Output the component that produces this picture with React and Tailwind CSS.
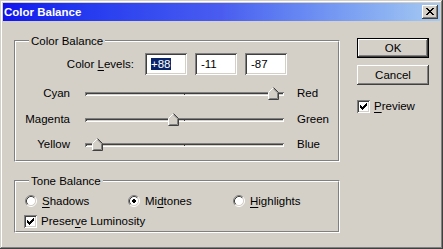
import React from "react";

const sunken =
  "shadow-[inset_1px_1px_0_#808080,inset_-1px_-1px_0_#ffffff,inset_2px_2px_0_#404040,inset_-2px_-2px_0_#d4d0c8]";
const raised =
  "shadow-[inset_-1px_-1px_0_#404040,inset_1px_1px_0_#ffffff,inset_-2px_-2px_0_#808080]";

function U({ children }) {
  return <span className="underline decoration-1 underline-offset-[2px]">{children}</span>;
}

function GroupBox({ title, className, children }) {
  return (
    <div className={`border border-t-[#808080] border-l-[#808080] border-b-white border-r-white ${className}`}>
      <div className="h-full border border-t-white border-l-white border-b-[#808080] border-r-[#808080]">
        <div className="-mt-[7px] ml-[13px] w-fit bg-[#d4d0c8] px-[2px] leading-[13px]">{title}</div>
        {children}
      </div>
    </div>
  );
}

function Thumb({ left }) {
  return (
    <svg
      className="absolute top-[-5px]"
      style={{ left }}
      width="11"
      height="13"
      viewBox="0 0 11 13"
    >
      <polygon points="5.5,0.5 10.5,5.5 10.5,12.5 0.5,12.5 0.5,5.5" fill="#d4d0c8" />
      <path d="M0.5 12 V5.5 L5.5 0.5" fill="none" stroke="#ffffff" strokeWidth="1" />
      <path d="M5.5 0.5 L10.5 5.5 V12.5 H0.5" fill="none" stroke="#404040" strokeWidth="1" />
      <path d="M5.5 1.8 L9.5 5.8 V11.5 H1.5" fill="none" stroke="#808080" strokeWidth="1" />
    </svg>
  );
}

function SliderRow({ left, right, value, className }) {
  const pos = Math.round(94.5 + value * 1.01);
  return (
    <div className={`flex h-[13px] ${className}`}>
      <div className="w-[54px] text-right leading-[13px]">{left}</div>
      <div className={`relative ml-[15px] mt-[5px] h-[4px] w-[199px] bg-[#d4d0c8] ${sunken}`}>
        <div className="absolute left-[99px] top-[1px] h-[2px] w-px bg-[#404040]" />
        <Thumb left={pos} />
      </div>
      <div className="ml-[13px] leading-[13px]">{right}</div>
    </div>
  );
}

function Radio({ checked }) {
  return (
    <svg width="12" height="12" viewBox="0 0 12 12" className="shrink-0">
      <circle cx="6" cy="6" r="4.5" fill="#ffffff" />
      <path d="M2.11 9.89 A5.5 5.5 0 0 1 9.89 2.11" fill="none" stroke="#808080" />
      <path d="M9.89 2.11 A5.5 5.5 0 0 1 2.11 9.89" fill="none" stroke="#ffffff" />
      <path d="M2.82 9.18 A4.5 4.5 0 0 1 9.18 2.82" fill="none" stroke="#404040" />
      <path d="M9.18 2.82 A4.5 4.5 0 0 1 2.82 9.18" fill="none" stroke="#d4d0c8" />
      {checked && (
        <g fill="#000000" shapeRendering="crispEdges">
          <rect x="5" y="4" width="2" height="4" />
          <rect x="4" y="5" width="4" height="2" />
        </g>
      )}
    </svg>
  );
}

function Check() {
  const rows = [
    [6, 0, 1],
    [5, 1, 2],
    [0, 2, 1],
    [4, 2, 3],
    [0, 3, 2],
    [3, 3, 3],
    [0, 4, 5],
    [1, 5, 3],
    [2, 6, 1],
  ];
  return (
    <div className={`relative h-[13px] w-[13px] shrink-0 bg-white ${sunken}`}>
      <svg width="13" height="13" viewBox="0 0 13 13" className="block" shapeRendering="crispEdges">
        {rows.map(([x, y, w], i) => (
          <rect key={i} x={3 + x} y={3 + y} width={w} height="1" fill="#000000" />
        ))}
      </svg>
    </div>
  );
}

function Field({ children }) {
  return (
    <div className={`flex h-[22px] w-[42px] items-center bg-white pl-[6px] ${sunken}`}>{children}</div>
  );
}

export default function App() {
  return (
    <div
      className={`h-[249px] w-[443px] overflow-hidden bg-[#d4d0c8] p-[3px] text-[11.5px] text-black font-['Liberation_Sans',Arial,sans-serif] shadow-[inset_-1px_-1px_0_#404040,inset_1px_1px_0_#d4d0c8,inset_-2px_-2px_0_#808080,inset_2px_2px_0_#ffffff]`}
    >
      {/* Title bar */}
      <div className="flex h-[18px] items-center bg-gradient-to-r from-[#1212ee] via-[#4a5cf0] to-[#a6caf0] pl-[1px]">
        <div className="flex-1 text-[11.5px] font-bold leading-[18px] text-white">Color Balance</div>
        <div className={`mr-[2px] flex h-[14px] w-[16px] items-center justify-center bg-[#d4d0c8] ${raised}`}>
          <svg width="8" height="7" viewBox="0 0 8 7" shapeRendering="crispEdges" className="mt-[-1px]">
            <g fill="#000000">
              <rect x="0" y="0" width="2" height="1" />
              <rect x="6" y="0" width="2" height="1" />
              <rect x="1" y="1" width="2" height="1" />
              <rect x="5" y="1" width="2" height="1" />
              <rect x="2" y="2" width="4" height="1" />
              <rect x="3" y="3" width="2" height="1" />
              <rect x="2" y="4" width="4" height="1" />
              <rect x="1" y="5" width="2" height="1" />
              <rect x="5" y="5" width="2" height="1" />
              <rect x="0" y="6" width="2" height="1" />
              <rect x="6" y="6" width="2" height="1" />
            </g>
          </svg>
        </div>
      </div>

      {/* Body */}
      <div className="flex">
        <div className="ml-[11px] mt-[19px] w-[326px]">
          <GroupBox className="h-[122px]" title="Color Balance">
            <div className="mt-[5px] flex h-[22px] items-center">
              <div className="w-[118px] text-right leading-[13px]">
                Color <U>L</U>evels:
              </div>
              <div className="ml-[11px] flex gap-[8px]">
                <Field>
                  <span className="bg-[#0a246a] leading-[12px] text-white">+88</span>
                </Field>
                <Field>
                  <span className="leading-[12px]">-11</span>
                </Field>
                <Field>
                  <span className="leading-[12px]">-87</span>
                </Field>
              </div>
            </div>
            <SliderRow className="mt-[12px]" left="Cyan" right="Red" value={88} />
            <SliderRow className="mt-[13px]" left="Magenta" right="Green" value={-11} />
            <SliderRow className="mt-[12px]" left="Yellow" right="Blue" value={-87} />
          </GroupBox>

          <GroupBox className="mt-[18px] h-[53px]" title="Tone Balance">
            <div className="mt-[7px] flex h-[12px] items-center pl-[9px]">
              <div className="flex w-[103px] items-center gap-[5px]">
                <Radio />
                <span className="leading-[13px]">
                  <U>S</U>hadows
                </span>
              </div>
              <div className="flex w-[105px] items-center gap-[5px]">
                <Radio checked />
                <span className="leading-[13px]">
                  Mi<U>d</U>tones
                </span>
              </div>
              <div className="flex items-center gap-[5px]">
                <Radio />
                <span className="leading-[13px]">
                  <U>H</U>ighlights
                </span>
              </div>
            </div>
            <div className="mt-[8px] flex h-[13px] items-center gap-[4px] pl-[8px]">
              <Check />
              <span className="leading-[13px]">
                Preser<U>v</U>e Luminosity
              </span>
            </div>
          </GroupBox>
        </div>

        <div className="ml-[17px] mt-[17px] w-[72px]">
          <div className={`flex h-[20px] w-[72px] items-center justify-center border border-black bg-[#d4d0c8] ${raised}`}>
            <span className="leading-[13px]">OK</span>
          </div>
          <div className={`mt-[7px] flex h-[20px] w-[72px] items-center justify-center bg-[#d4d0c8] ${raised}`}>
            <span className="leading-[13px]">Cancel</span>
          </div>
          <div className="mt-[15px] flex h-[13px] items-center gap-[4px]">
            <Check />
            <span className="leading-[13px]">
              <U>P</U>review
            </span>
          </div>
        </div>
      </div>
    </div>
  );
}
